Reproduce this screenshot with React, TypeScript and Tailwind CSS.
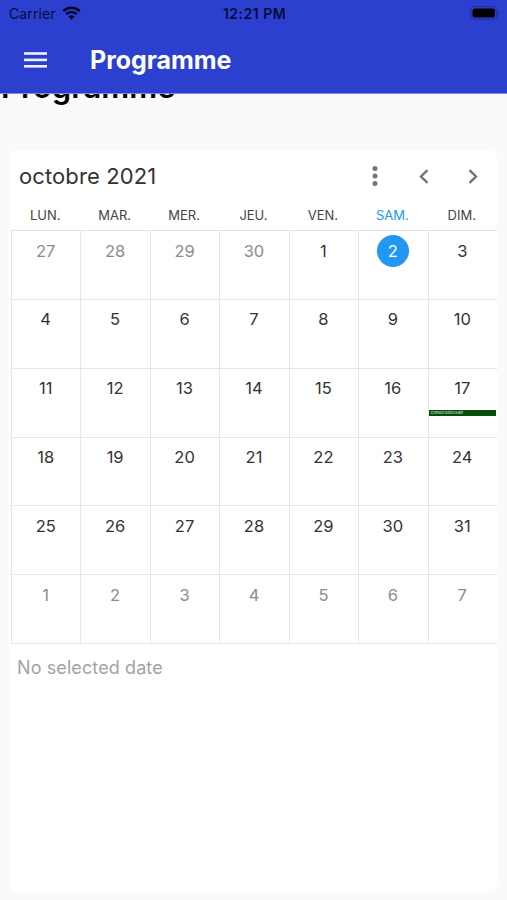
import clsx from 'clsx';

type Day = {
  label: number;
  muted?: boolean;
  today?: boolean;
  event?: string;
};

const weekdays = ['LUN.', 'MAR.', 'MER.', 'JEU.', 'VEN.', 'SAM.', 'DIM.'];

const range = (from: number, to: number, muted = false): Day[] =>
  Array.from({ length: to - from + 1 }, (_, i) => ({ label: from + i, muted }));

const days: Day[] = [
  ...range(27, 30, true),
  ...range(1, 31).map((day) => ({
    ...day,
    today: day.label === 2,
    event: day.label === 17 ? 'Conseil Diocesain' : undefined,
  })),
  ...range(1, 7, true),
];

const StatusBar = () => (
  <div className="grid h-[27px] grid-cols-3 items-center pl-[9px] pr-[7px] text-[14px] leading-none text-[#080b38]">
    <div className="flex items-center gap-[6px]">
      <span className="tracking-[0.1px]">Carrier</span>
      <svg className="-mt-[2px]" width="19" height="14" viewBox="0 0 19 14" fill="none">
        <path d="M1.3 5.1a11.8 11.8 0 0 1 16.4 0" stroke="#05071f" strokeWidth="2.5" />
        <path d="M4.3 8.2a7.5 7.5 0 0 1 10.4 0" stroke="#05071f" strokeWidth="2.4" />
        <path d="M6.4 10.6a4.5 4.5 0 0 1 6.2 0L9.5 13.7z" fill="#05071f" />
      </svg>
    </div>
    <span className="text-center font-semibold tracking-[0.5px] whitespace-nowrap">12:21 PM</span>
    <svg className="-mt-px justify-self-end" width="30" height="14" viewBox="0 0 30 14">
      <rect x="0.7" y="0.7" width="26" height="12.6" rx="3.8" fill="none" stroke="#2230a0" strokeWidth="1.3" />
      <rect x="2.5" y="2.5" width="22.4" height="9" rx="2" fill="#000" />
      <path d="M28 5v4.2c1-.4 1.6-1.2 1.6-2.1S29 5.4 28 5z" fill="#2230a0" />
    </svg>
  </div>
);

const Header = () => (
  <header className="h-[94px] border-b border-[#7f89df] bg-[#2b40cf]">
    <StatusBar />
    <div className="flex h-[66px] items-center gap-[43px] pl-6">
      <svg width="23" height="16" viewBox="0 0 23 16" fill="#f1f2fd">
        <rect y="0.2" width="23" height="2.6" />
        <rect y="6.6" width="23" height="2.6" />
        <rect y="13" width="23" height="2.6" />
      </svg>
      <h1 className="text-[25px] leading-[30px] font-bold tracking-[-0.05px] text-white">Programme</h1>
    </div>
  </header>
);

const Toolbar = () => (
  <div className="flex h-[52px] items-center pl-[10px] pr-[19px]">
    <h2 className="flex-1 text-[22px] tracking-[0.1px] text-[#333]">octobre 2021</h2>
    <svg width="6" height="20" viewBox="0 0 6 20" fill="#747474">
      <circle cx="3" cy="2.6" r="2.5" />
      <circle cx="3" cy="10" r="2.5" />
      <circle cx="3" cy="17.4" r="2.5" />
    </svg>
    <svg className="ml-[41px]" width="10" height="15" viewBox="0 0 10 15" fill="none" stroke="#747474" strokeWidth="2.4">
      <path d="M8.5 1.1 2 7.5l6.5 6.4" />
    </svg>
    <svg className="ml-[39px]" width="10" height="15" viewBox="0 0 10 15" fill="none" stroke="#747474" strokeWidth="2.4">
      <path d="M1.5 1.1 8 7.5l-6.5 6.4" />
    </svg>
  </div>
);

const DayCell = ({ day }: { day: Day }) => (
  <div className="flex flex-col items-center border-b border-l border-[#e6e6e6] pt-1">
    <span
      className={clsx(
        'flex size-8 items-center justify-center rounded-full pr-px text-[16.5px]',
        day.today && 'bg-[#2196f3] text-white',
        !day.today && (day.muted ? 'text-[#8c8c8c]' : 'text-[#333]'),
      )}
    >
      {day.label}
    </span>
    {day.event && (
      <div className="mt-[5px] h-[6px] w-full pr-[1px]">
        <div className="h-[6px] overflow-hidden bg-[#054d0b] pl-[2px] text-[4px] leading-[6px] font-medium tracking-[-0.1px] whitespace-nowrap text-[#c8d9c9]">
          {day.event}
        </div>
      </div>
    )}
  </div>
);

export default function App() {
  return (
    <div className="h-[900px] w-[507px] overflow-hidden bg-[#fafafa] font-['Inter','Liberation_Sans',sans-serif]">
      <Header />

      {/* Page title, scrolled partly under the header */}
      <div className="flex h-14 flex-col overflow-hidden pl-px text-[31px] leading-[36px] font-semibold tracking-[0.1px] text-black">
        <span className="-mt-[25px]">Programme</span>
      </div>

      <main className="mr-[10px] ml-[9px] h-[742px] rounded-lg bg-white">
        <Toolbar />
        <div className="ml-[2px]">
          <div className="grid h-[29px] grid-cols-7 items-center border-b border-[#e2e2e2]">
            {weekdays.map((name) => (
              <span
                key={name}
                className={clsx(
                  'pr-px text-center text-[13px]',
                  name === 'SAM.' ? 'text-[#2196f3]' : 'text-[#444]',
                )}
              >
                {name}
              </span>
            ))}
          </div>
          <div className="grid h-[413px] grid-cols-7 grid-rows-6">
            {days.map((day, index) => (
              <DayCell key={index} day={day} />
            ))}
          </div>
        </div>
        <p className="mt-[10px] pl-2 text-[18px] tracking-[0.1px] text-[#a3a3a3]">No selected date</p>
      </main>
    </div>
  );
}
